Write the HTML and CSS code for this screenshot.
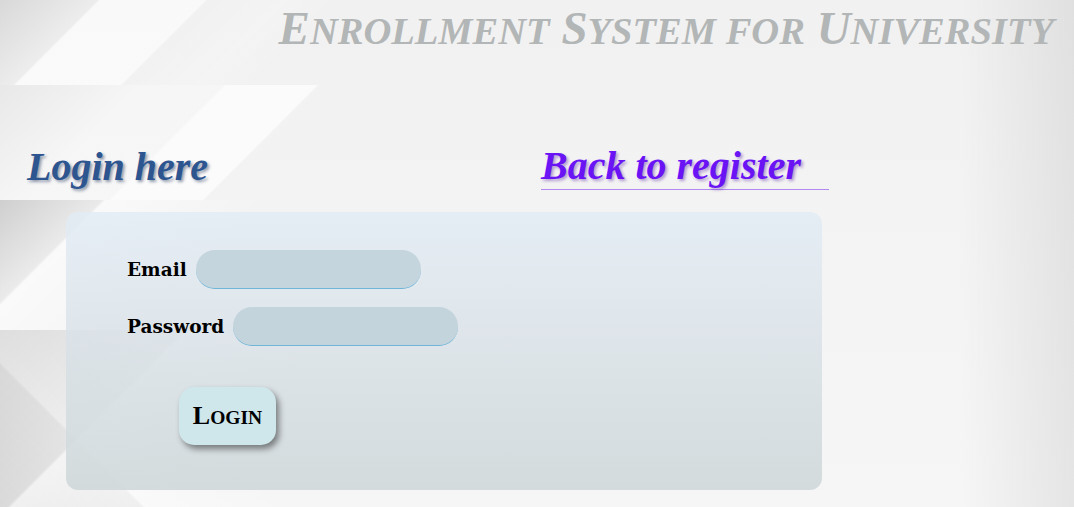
FILE: index.html
```html
<!DOCTYPE html>
<html>
<head>
<meta charset="utf-8">
<link rel="stylesheet" href="styles.css">
</head>
<body>
<div class="bg">
  <header class="top">
    <h1 class="title">E<span class="sc">nrollment</span> S<span class="sc">ystem for</span> U<span class="sc">niversity</span></h1>
  </header>
  <div class="heads">
    <h2 class="login-here">Login here</h2>
    <a class="back" href="#">Back to register</a>
  </div>
  <form class="card">
    <div class="row">
      <label class="lbl">Email</label>
      <input class="field" type="text">
    </div>
    <div class="row">
      <label class="lbl">Password</label>
      <input class="field" type="password">
    </div>
    <button class="btn" type="button">L<span class="sc2">ogin</span></button>
  </form>
</div>
</body>
</html>
```
FILE: styles.css
```css
html, body {
  margin: 0;
  padding: 0;
}
body {
  width: 1074px;
  height: 507px;
  overflow: hidden;
  background: #f4f4f4;
}
.bg {
  width: 1074px;
  height: 507px;
  box-sizing: border-box;
  background:
    linear-gradient(90deg, rgba(0,0,0,0) 960px, rgba(0,0,0,0.07) 1074px),
    linear-gradient(135deg, rgba(0,0,0,0.10) 0, rgba(0,0,0,0.02) 69px, rgba(255,255,255,0.6) 71px, rgba(255,255,255,0.6) 145px, rgba(255,255,255,0) 147px, rgba(255,255,255,0.2) 200px, rgba(255,255,255,0) 240px) 0 0 / 340px 85px no-repeat,
    linear-gradient(135deg, rgba(0,0,0,0.04) 0, rgba(255,255,255,0.3) 100px, rgba(255,255,255,0.3) 158px, rgba(255,255,255,0.7) 160px, rgba(255,255,255,0.7) 224px, rgba(255,255,255,0) 226px) 0 85px / 340px 115px no-repeat,
    linear-gradient(135deg, rgba(0,0,0,0.15) 0, rgba(0,0,0,0.04) 72px, rgba(255,255,255,0.55) 75px, rgba(255,255,255,0) 190px) 0 200px / 420px 130px no-repeat,
    linear-gradient(135deg, rgba(0,0,0,0.10) 0, rgba(0,0,0,0.04) 130px, rgba(255,255,255,0.45) 133px, rgba(255,255,255,0) 240px) 0 330px / 420px 177px no-repeat,
    linear-gradient(45deg, rgba(0,0,0,0.08) 0, rgba(0,0,0,0.03) 100px, rgba(255,255,255,0.4) 103px, rgba(255,255,255,0) 210px) 0 330px / 420px 177px no-repeat,
    linear-gradient(180deg, #f1f1f1 0, #f6f6f6 100%);
}
.top {
  display: flex;
  justify-content: flex-end;
  padding: 0 20px 0 0;
  height: 60px;
}
.title {
  margin: 0;
  padding-top: 1px;
  font-family: "Liberation Serif", "Times New Roman", serif;
  font-weight: bold;
  font-style: italic;
  text-transform: uppercase;
  font-size: 47px;
  line-height: 54px;
  color: #b3b6b6;
  white-space: nowrap;
}
.sc {
  font-size: 0.82em;
}
.heads {
  display: flex;
  align-items: flex-end;
  padding-top: 84px;
  height: 46px;
}
.login-here {
  margin: 0 0 0 27px;
  width: 514px;
  font-family: "Liberation Serif", "Times New Roman", serif;
  font-weight: bold;
  font-style: italic;
  font-size: 40px;
  line-height: 46px;
  color: #2d5590;
  text-shadow: 2px 2px 3px rgba(20,40,80,0.45);
}
.back {
  display: block;
  font-family: "Liberation Serif", "Times New Roman", serif;
  font-weight: bold;
  font-style: italic;
  font-size: 40px;
  line-height: 46px;
  color: #6a14f5;
  text-decoration: none;
  border-bottom: 1px solid #b08af0;
  padding-right: 28px;
  text-shadow: 2px 2px 3px rgba(80,20,160,0.4);
}
.card {
  margin: 22px 0 0 66px;
  width: 756px;
  height: 278px;
  box-sizing: border-box;
  border-radius: 12px;
  background: linear-gradient(180deg, rgba(226,236,245,0.82) 0, rgba(218,226,232,0.82) 45%, rgba(206,215,217,0.88) 100%);
  padding: 38px 0 0 61px;
  display: flex;
  flex-direction: column;
}
.row {
  display: flex;
  align-items: center;
  height: 39px;
  margin-bottom: 18px;
}
.lbl {
  font-family: "DejaVu Serif", serif;
  font-weight: bold;
  font-size: 18.5px;
  color: #000;
  margin-right: 9px;
}
.field {
  width: 225px;
  height: 39px;
  box-sizing: border-box;
  border: none;
  border-bottom: 1px solid #6fb5d8;
  border-radius: 19px;
  background: rgba(186,205,215,0.75);
  outline: none;
}
.btn {
  margin: 23px 0 0 52px;
  width: 97px;
  height: 58px;
  border: none;
  border-radius: 15px;
  background: #cfe6ea;
  box-shadow: 3px 4px 6px rgba(0,0,0,0.45);
  font-family: "Liberation Serif", "Times New Roman", serif;
  font-weight: bold;
  text-transform: uppercase;
  font-size: 26px;
  color: #000;
  padding: 0;
}
.sc2 {
  font-size: 0.75em;
}
```
